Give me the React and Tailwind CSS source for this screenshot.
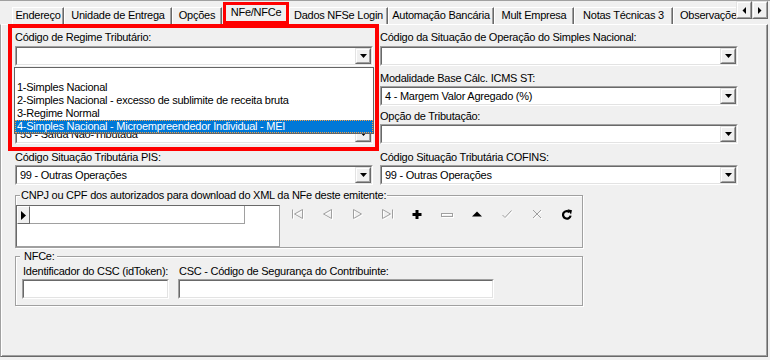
import React from "react";

function DropBtn() {
  return (
    <div className="w-[16px] h-full shrink-0 border border-t-[#e3e3e3] border-l-[#e3e3e3] border-r-[#696969] border-b-[#696969] bg-[#f0f0f0]">
      <div className="h-full border border-t-white border-l-white border-r-[#a0a0a0] border-b-[#a0a0a0] flex items-center justify-center">
        <svg width="7" height="4" viewBox="0 0 7 4">
          <path d="M0 0H7L3.5 4Z" fill="#000" />
        </svg>
      </div>
    </div>
  );
}

function Combo({ value = "", className = "" }) {
  return (
    <div className={`h-[20px] border border-t-[#a0a0a0] border-l-[#a0a0a0] border-r-white border-b-white ${className}`}>
      <div className="h-full border border-t-[#696969] border-l-[#696969] border-r-[#e3e3e3] border-b-[#e3e3e3] bg-white flex items-center">
        <div className="flex-1 pl-[3px] whitespace-nowrap overflow-hidden">{value}</div>
        <DropBtn />
      </div>
    </div>
  );
}

function Edit({ className = "" }) {
  return (
    <div className={`h-[20px] border border-t-[#a0a0a0] border-l-[#a0a0a0] border-r-white border-b-white ${className}`}>
      <div className="h-full border border-t-[#696969] border-l-[#696969] border-r-[#e3e3e3] border-b-[#e3e3e3] bg-white" />
    </div>
  );
}

function Field({ label, value, mt, gap = "mt-[1px]", children }) {
  return (
    <div className={mt}>
      <div className="h-[13px] whitespace-nowrap">{label}</div>
      <div className={`relative ${gap}`}>
        <Combo value={value} />
        {children}
      </div>
    </div>
  );
}

function Tab({ label, w }) {
  return (
    <div
      className={`h-[17px] shrink-0 flex justify-center pt-[1px] border-t border-l border-r border-t-white border-l-white border-r-[#696969] shadow-[inset_-1px_0_0_#a0a0a0] whitespace-nowrap overflow-hidden ${w}`}
    >
      {label}
    </div>
  );
}

function ScrollBtn({ left }) {
  return (
    <div className="w-[16px] h-[18px] border border-t-[#e3e3e3] border-l-[#e3e3e3] border-r-[#696969] border-b-[#696969] bg-[#f0f0f0]">
      <div className="h-full border border-t-white border-l-white border-r-[#a0a0a0] border-b-[#a0a0a0] flex items-center justify-center">
        <svg width="4" height="7" viewBox="0 0 4 7">
          {left ? <path d="M4 0V7L0.5 3.5Z" fill="#000" /> : <path d="M0 0V7L3.5 3.5Z" fill="#000" />}
        </svg>
      </div>
    </div>
  );
}

function Dis({ children }) {
  return (
    <svg width="13" height="12" viewBox="0 0 13 12" fill="none" strokeWidth="1">
      <g stroke="#ffffff" transform="translate(1 1)">{children}</g>
      <g stroke="#a0a0a0">{children}</g>
    </svg>
  );
}

function NavIcon({ kind }) {
  switch (kind) {
    case "first":
      return (
        <Dis>
          <path d="M1.5 1.5V10.5" />
          <path d="M11.5 1.5L3.5 6L11.5 10.5Z" />
        </Dis>
      );
    case "prior":
      return (
        <Dis>
          <path d="M10.5 1.5L2.5 6L10.5 10.5Z" />
        </Dis>
      );
    case "next":
      return (
        <Dis>
          <path d="M2.5 1.5L10.5 6L2.5 10.5Z" />
        </Dis>
      );
    case "last":
      return (
        <Dis>
          <path d="M1.5 1.5L9.5 6L1.5 10.5Z" />
          <path d="M11.5 1.5V10.5" />
        </Dis>
      );
    case "insert":
      return (
        <svg width="12" height="12" viewBox="0 0 12 12">
          <path d="M4.5 2H7.5V5H10.5V8H7.5V11H4.5V8H1.5V5H4.5Z" fill="#000" />
        </svg>
      );
    case "delete":
      return (
        <Dis>
          <rect x="0.5" y="5.5" width="11" height="3" />
        </Dis>
      );
    case "edit":
      return (
        <svg width="12" height="12" viewBox="0 0 12 12">
          <path d="M1 8.5L6 3.5L11 8.5Z" fill="#000" />
        </svg>
      );
    case "post":
      return (
        <Dis>
          <path d="M1.5 7L4 9.5L10.5 2.5" />
        </Dis>
      );
    case "cancel":
      return (
        <Dis>
          <path d="M2 2L10 10M10 2L2 10" />
        </Dis>
      );
    case "refresh":
      return (
        <svg width="12" height="12" viewBox="0 0 12 12">
          <path d="M8.6 4.2A3.8 3.8 0 1 0 9.6 7.6" stroke="#000" strokeWidth="2.2" fill="none" />
          <path d="M6.5 1.2L11 2.2L10 6.5Z" fill="#000" />
        </svg>
      );
    default:
      return null;
  }
}

export default function App() {
  const tabs = [
    { label: "Endereço", w: "w-[52px]" },
    { label: "Unidade de Entrega", w: "w-[108px]" },
    { label: "Opções", w: "w-[50px]" },
  ];
  const tabs2 = [
    { label: "Dados NFSe Login", w: "w-[99px]" },
    { label: "Automação Bancária", w: "w-[106px]" },
    { label: "Mult Empresa", w: "w-[80px]" },
    { label: "Notas Técnicas  3", w: "w-[99px]" },
    { label: "Observações", w: "w-[80px] justify-start pl-[6px]" },
  ];
  const navs = ["first", "prior", "next", "last", "insert", "delete", "edit", "post", "cancel", "refresh"];

  return (
    <div className="relative w-[770px] h-[360px] overflow-hidden bg-[#f0f0f0] text-[11px] leading-[13px] tracking-[-0.25px] text-black font-['Liberation_Sans',Arial,sans-serif] border-t border-t-[#a0a0a0]">
      {/* Tab strip */}
      <div className="flex h-[23px]">
        <div className="flex flex-1 items-end overflow-hidden pl-[12px]">
          {tabs.map((t) => (
            <Tab key={t.label} {...t} />
          ))}
          <div className="h-[22px] w-[66px] ml-[1px] shrink-0 flex justify-center pt-[1px] border-[3px] border-[#ff0000] whitespace-nowrap">
            NFe/NFCe
          </div>
          {tabs2.map((t) => (
            <Tab key={t.label} {...t} />
          ))}
        </div>
        <div className="flex self-start mr-[2px]">
          <ScrollBtn left />
          <ScrollBtn />
        </div>
      </div>

      {/* Page */}
      <div className="w-[768px] h-[333px] border border-l-[#a0a0a0] border-t-white border-r-[#696969] border-b-[#696969] shadow-[inset_1px_0_0_#ffffff,inset_-1px_-1px_0_#a0a0a0] pl-[14px]">
        <div className="grid grid-cols-[358px_358px] gap-x-[7px]">
          <Field label="Código de Regime Tributário:" value="" mt="mt-[6px]" gap="mt-[2px]">
            <div className="absolute left-[-1px] top-[21px] w-[360px] h-[67px] border border-[#646464] bg-white z-10">
              <div className="h-[13px]" />
              <div className="h-[13px] pl-[2px] whitespace-nowrap">1-Simples Nacional</div>
              <div className="h-[13px] pl-[2px] whitespace-nowrap">2-Simples Nacional - excesso de sublimite de receita bruta</div>
              <div className="h-[13px] pl-[2px] whitespace-nowrap">3-Regime Normal</div>
              <div className="h-[13px] leading-[11px] pl-[1px] whitespace-nowrap bg-[#0078d7] text-white border border-dotted border-[#f7a046]">
                4-Simples Nacional - Microempreendedor Individual - MEI
              </div>
            </div>
          </Field>
          <Field label="Código da Situação de Operação do Simples Nacional:" value="" mt="mt-[6px]" gap="mt-[2px]" />

          <Field label="" value="" mt="mt-[6px]" />
          <Field label="Modalidade Base Cálc. ICMS ST:" value="4 - Margem Valor Agregado (%)" mt="mt-[6px]" />

          <Field label="" value="53 - Saída Não-Tributada" mt="mt-[4px]" />
          <Field label="Opção de Tributação:" value="" mt="mt-[4px]" />

          <Field label="Código Situação Tributária PIS:" value="99 - Outras Operações" mt="mt-[7px]" />
          <Field label="Código Situação Tributária COFINS:" value="99 - Outras Operações" mt="mt-[7px]" />
        </div>

        {/* CNPJ group */}
        <div className="mt-[10px] w-[568px] border border-[#a0a0a0] shadow-[1px_1px_0_#ffffff,inset_1px_1px_0_#ffffff]">
          <div className="-mt-[7px] ml-[4px] px-[1px] w-fit h-[13px] bg-[#f0f0f0] whitespace-nowrap">
            CNPJ ou CPF dos autorizados para download do XML da NFe deste emitente:
          </div>
          <div className="flex">
            <div className="mt-[3px] w-[264px] h-[42px] border border-t-[#696969] border-l-[#696969] border-r-[#a0a0a0] border-b-[#a0a0a0] bg-white">
              <div className="flex h-[18px]">
                <div className="w-[13px] h-full border border-t-white border-l-white border-r-[#696969] border-b-[#696969] bg-[#f0f0f0] flex items-center justify-center">
                  <svg width="5" height="9" viewBox="0 0 5 9">
                    <path d="M0 0L5 4.5L0 9Z" fill="#000" />
                  </svg>
                </div>
                <div className="w-[215px] h-full border-r border-b border-r-[#a0a0a0] border-b-[#a0a0a0] bg-white" />
              </div>
            </div>
            <div className="flex ml-[2px] mt-[3px] h-[18px]">
              {navs.map((n) => (
                <div key={n} className="w-[30px] h-full flex items-center justify-center">
                  <NavIcon kind={n} />
                </div>
              ))}
            </div>
          </div>
        </div>

        {/* NFCe group */}
        <div className="mt-[8px] w-[568px] border border-[#a0a0a0] shadow-[1px_1px_0_#ffffff,inset_1px_1px_0_#ffffff] pl-[6px] pb-[6px]">
          <div className="-mt-[7px] -ml-[2px] pl-[4px] pr-[2px] w-fit h-[13px] bg-[#f0f0f0] whitespace-nowrap">NFCe:</div>
          <div className="flex mt-[2px]">
            <div className="w-[147px]">
              <div className="h-[13px] pl-[1px] whitespace-nowrap">Identificador do CSC (idToken):</div>
              <Edit className="mt-[1px]" />
            </div>
            <div className="w-[316px] ml-[9px]">
              <div className="h-[13px] pl-[1px] whitespace-nowrap">CSC - Código de Segurança do Contribuinte:</div>
              <Edit className="mt-[1px]" />
            </div>
          </div>
        </div>
      </div>

      {/* annotation */}
      <div className="absolute left-[8px] top-[23px] w-[371px] h-[127px] border-4 border-[#ff0000] z-20 pointer-events-none" />
    </div>
  );
}
